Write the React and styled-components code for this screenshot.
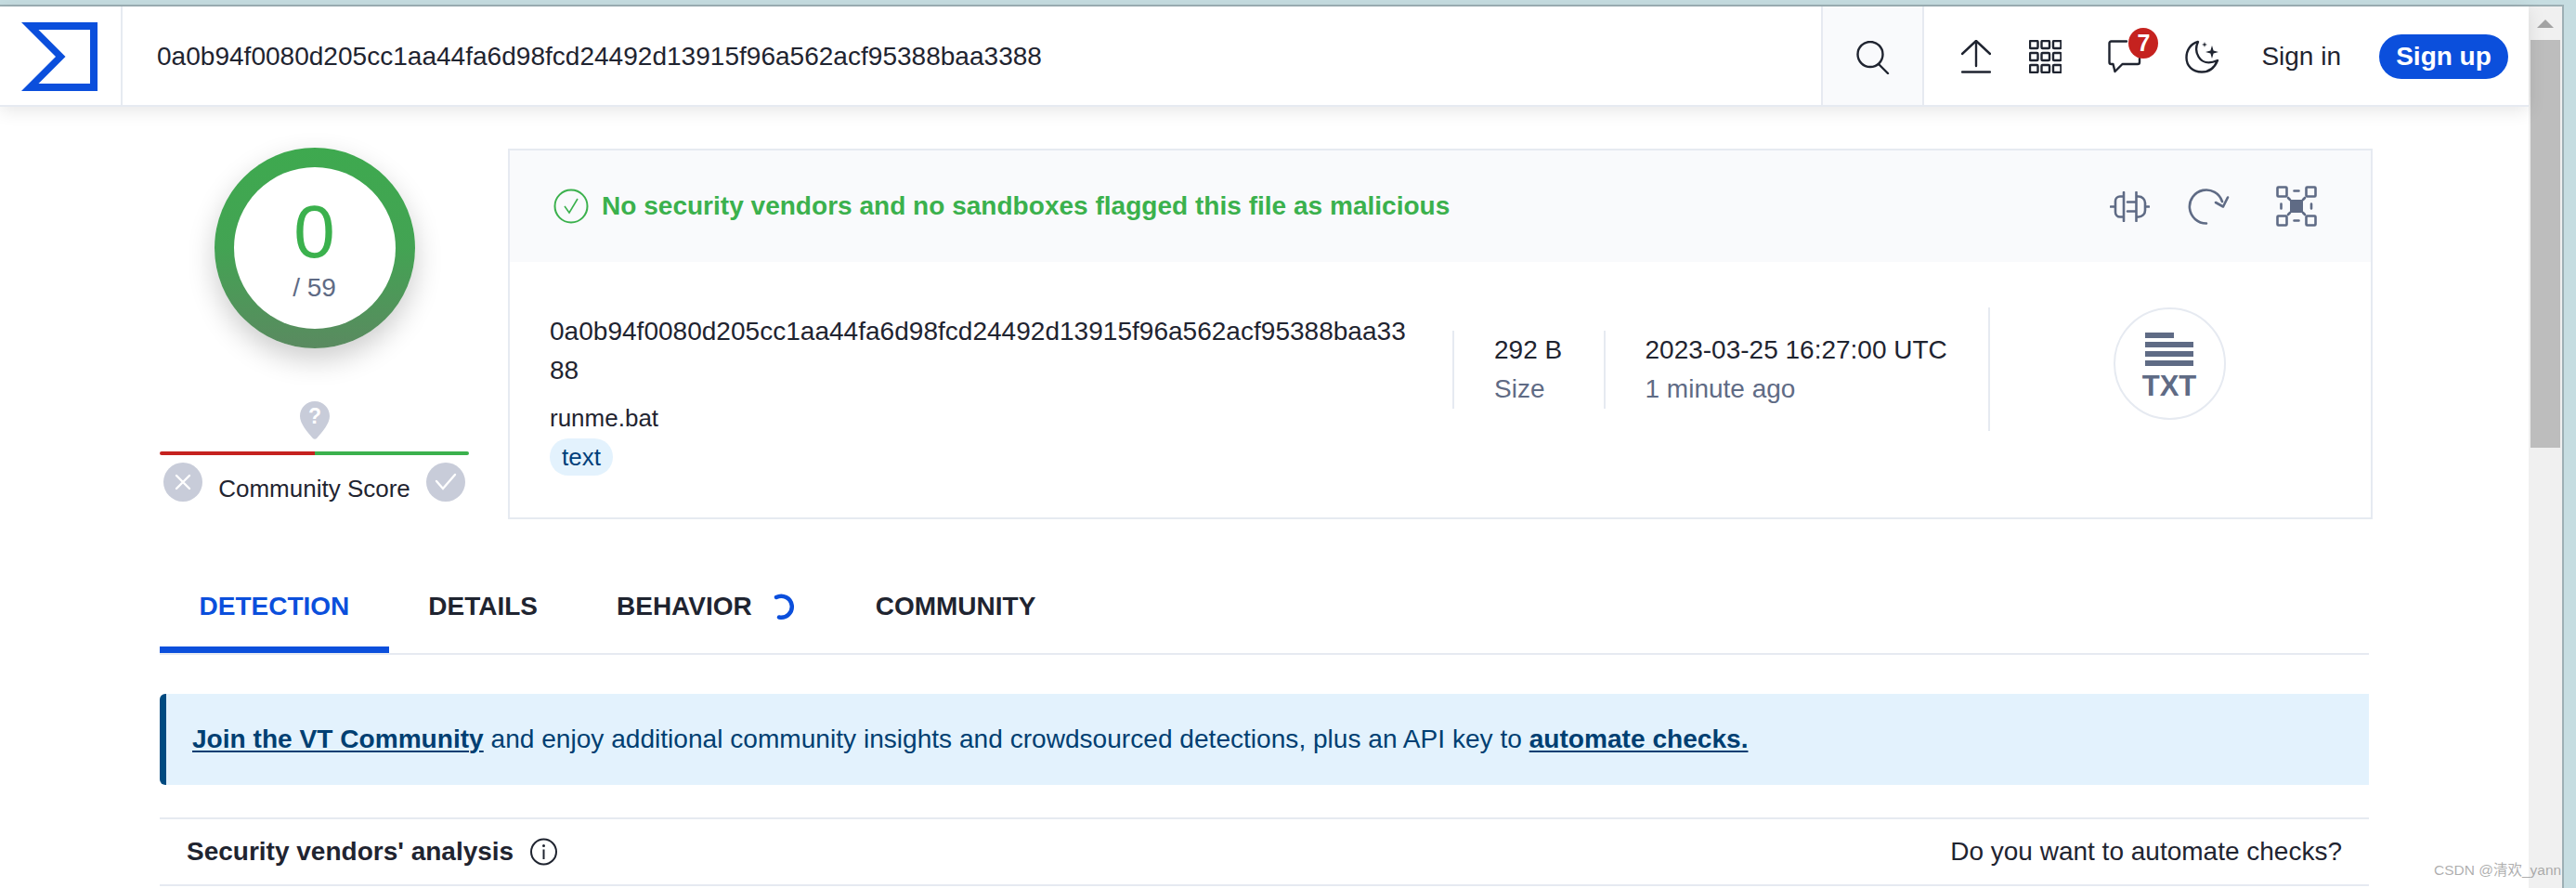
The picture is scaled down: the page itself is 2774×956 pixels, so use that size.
import React from 'react';
import styled, { createGlobalStyle } from 'styled-components';

const GlobalStyle = createGlobalStyle`
  html, body {
    margin: 0;
    padding: 0;
    background: #c6dde1;
    overflow: hidden;
  }
  * {
    box-sizing: border-box;
  }
  body {
    font-family: "Liberation Sans", Arial, sans-serif;
    color: #1f2430;
  }
`;

const Screen = styled.div`
  position: relative;
  width: 2774px;
  height: 956px;
  padding-top: 5px;
  overflow: hidden;
`;

const BrowserFrame = styled.div`
  display: flex;
  width: 2761px;
  height: 951px;
  border-top: 2px solid #9db0b5;
  border-right: 2px solid #9db0b5;
`;

const Page = styled.main`
  flex: 1;
  min-width: 0;
  background: #fff;
`;

const ScrollTrack = styled.div`
  width: 36px;
  background: #f0f0f0;
  display: flex;
  flex-direction: column;
  align-items: center;
  padding-top: 14px;
`;

const ScrollArrow = styled.div`
  width: 0;
  height: 0;
  border-left: 9px solid transparent;
  border-right: 9px solid transparent;
  border-bottom: 9px solid #a3a3a3;
`;

const ScrollThumb = styled.div`
  width: 32px;
  height: 439px;
  margin-top: 13px;
  background: #bdbdbd;
`;

const Header = styled.header`
  position: relative;
  display: flex;
  height: 108px;
  border-bottom: 2px solid #e6eaf1;
  background: #fff;
  box-shadow: 0 4px 18px rgba(0, 0, 0, 0.1);
`;

const LogoCell = styled.div`
  width: 132px;
  flex: none;
  padding: 17px 0 0 23px;
  border-right: 2px solid #e6eaf1;
`;

const SearchText = styled.div`
  flex: 1;
  padding-left: 37px;
  font-size: 28.05px;
  line-height: 108px;
  color: #1f2430;
`;

const SearchCell = styled.div`
  width: 111px;
  flex: none;
  display: flex;
  padding: 37px 0 0 36px;
  background: #f9fafc;
  border-left: 2px solid #e6eaf1;
  border-right: 2px solid #e6eaf1;
`;

const Actions = styled.div`
  display: flex;
  align-items: flex-start;
  padding: 36px 22px 0 40px;
  flex: none;
`;

const ActionIcon = styled.div`
  position: relative;
  display: flex;
  margin-left: ${(p) => p.$gap || 0}px;
`;

const Badge = styled.span`
  position: absolute;
  left: 22px;
  top: -13px;
  width: 32px;
  height: 33px;
  border-radius: 50%;
  background: #c5221f;
  color: #fff;
  font-size: 25px;
  font-weight: 700;
  line-height: 33px;
  text-align: center;
`;

const SignIn = styled.span`
  margin-left: 45px;
  font-size: 28px;
  line-height: 48px;
  margin-top: -6px;
  color: #1f2430;
`;

const SignUp = styled.span`
  width: 139px;
  height: 48px;
  margin-left: 41px;
  margin-top: -6px;
  border-radius: 24px;
  background: #0b4fdc;
  color: #fff;
  font-size: 28px;
  font-weight: 700;
  line-height: 48px;
  text-align: center;
`;

const Content = styled.div`
  padding: 45px 0 0 172px;
`;

const Summary = styled.section`
  display: flex;
  gap: 42px;
  width: 2383px;
`;

const ScoreColumn = styled.div`
  width: 333px;
  flex: none;
  display: flex;
  flex-direction: column;
  align-items: center;
`;

const ScoreRing = styled.div`
  width: 216px;
  height: 216px;
  margin-top: -1px;
  padding: 21px;
  border-radius: 50%;
  background: linear-gradient(180deg, #3ea94f 0%, #43a353 50%, #5a8a60 100%);
  box-shadow: 0 12px 30px rgba(0, 0, 0, 0.2);
`;

const ScoreInner = styled.div`
  width: 174px;
  height: 174px;
  border-radius: 50%;
  background: #fff;
  display: flex;
  flex-direction: column;
  align-items: center;
`;

const ScoreValue = styled.span`
  font-size: 80px;
  line-height: 80px;
  margin-top: 30px;
  color: #3bb14d;
`;

const ScoreTotal = styled.span`
  font-size: 28px;
  line-height: 32px;
  margin-top: 4px;
  color: #5f6b85;
`;

const PinWrap = styled.div`
  display: flex;
  margin-top: 57px;
`;

const ScoreBar = styled.div`
  display: flex;
  width: 100%;
  height: 4px;
  margin-top: 13px;
  border-radius: 2px;
  overflow: hidden;
`;

const ScoreBarPart = styled.div`
  flex: 1;
  background: ${(p) => p.$color};
`;

const VoteRow = styled.div`
  display: flex;
  justify-content: space-between;
  width: 100%;
  margin-top: 8px;
  padding: 0 4px;
`;

const VoteLabel = styled.span`
  font-size: 26px;
  line-height: 30px;
  margin-top: 13px;
  color: #1f2430;
`;

const Card = styled.div`
  flex: 1;
  min-width: 0;
  height: 399px;
  border: 2px solid #e6eaf1;
`;

const CardHeader = styled.div`
  display: flex;
  align-items: center;
  height: 120px;
  padding: 0 58px 0 47px;
  background: #f9fafc;
`;

const Verdict = styled.span`
  flex: 1;
  margin-left: 14px;
  font-size: 28.05px;
  font-weight: 700;
  color: #3bb14d;
`;

const CardTool = styled.div`
  display: flex;
  margin-left: ${(p) => p.$gap}px;
`;

const CardBody = styled.div`
  display: flex;
  align-items: flex-start;
`;

const FileColumn = styled.div`
  width: 1015px;
  flex: none;
  padding: 54px 0 0 43px;
`;

const FileHash = styled.div`
  width: 930px;
  font-size: 28.05px;
  line-height: 42px;
  word-break: break-all;
  color: #1f2430;
`;

const FileName = styled.div`
  margin-top: 13px;
  font-size: 26px;
  line-height: 34px;
  color: #1f2430;
`;

const FileTag = styled.span`
  display: inline-block;
  height: 40px;
  margin-top: 5px;
  padding: 0 13px;
  border-radius: 20px;
  background: #e3f2fd;
  color: #00407a;
  font-size: 26px;
  line-height: 40px;
`;

const Stat = styled.div`
  flex: none;
  width: ${(p) => p.$width}px;
  margin-top: 74px;
  padding-left: 43px;
  border-left: 2px solid #e6eaf1;
  font-size: 28px;
  line-height: 42px;
`;

const StatLabel = styled.div`
  color: #5f6b85;
`;

const TypeColumn = styled.div`
  margin-top: 49px;
  height: 133px;
  padding-left: 133px;
  border-left: 2px solid #e6eaf1;
`;

const TypeBadge = styled.div`
  width: 121px;
  height: 121px;
  border-radius: 50%;
  border: 2px solid #e6eaf1;
  display: flex;
  flex-direction: column;
  align-items: center;
  padding-top: 25px;
`;

const TypeText = styled.span`
  font-size: 31px;
  font-weight: 700;
  line-height: 26px;
  margin-top: 9px;
  color: #5f6b85;
`;

const Tabs = styled.nav`
  display: flex;
  width: 2379px;
  margin-top: 51px;
  border-bottom: 2px solid #e6eaf1;
`;

const Tab = styled.div`
  display: flex;
  align-items: center;
  height: 93px;
  padding: 0 42.5px;
  border-bottom: 7px solid ${(p) => (p.$active ? '#0b4fdc' : 'transparent')};
  color: ${(p) => (p.$active ? '#0b4fdc' : '#1f2430')};
  font-size: 28px;
  font-weight: 700;
`;

const TabSpinner = styled.div`
  display: flex;
  margin-left: 23px;
`;

const Banner = styled.div`
  width: 2379px;
  height: 98px;
  margin-top: 42px;
  padding-left: 28px;
  border-left: 7px solid #004a80;
  border-radius: 6px 0 0 6px;
  background: #e3f2fd;
  color: #003f72;
  font-size: 28.1px;
  line-height: 98px;
`;

const BannerLink = styled.a`
  font-weight: 700;
  text-decoration: underline;
  text-decoration-thickness: 2px;
  text-underline-offset: 3px;
  color: #003f72;
`;

const AnalysisRow = styled.div`
  display: flex;
  align-items: center;
  justify-content: space-between;
  width: 2379px;
  height: 74px;
  margin-top: 35px;
  padding: 0 29px;
  border-top: 2px solid #e6eaf1;
  border-bottom: 2px solid #e6eaf1;
  font-size: 28px;
`;

const AnalysisTitle = styled.div`
  display: flex;
  align-items: center;
  gap: 18px;
  font-weight: 700;
`;

const Watermark = styled.div`
  position: absolute;
  left: 2621px;
  top: 926px;
  white-space: nowrap;
  font-family: "Liberation Sans", "Noto Sans CJK SC", sans-serif;
  font-size: 15.5px;
  line-height: 22px;
  color: rgba(120, 120, 120, 0.6);
`;

const stroke = { fill: 'none', stroke: '#1f2430', strokeWidth: 2.4, strokeLinecap: 'round', strokeLinejoin: 'round' };
const grey = { fill: 'none', stroke: '#5f6b85', strokeWidth: 2.6, strokeLinecap: 'round', strokeLinejoin: 'round' };

const LogoIcon = () => (
  <svg width="82" height="74" viewBox="0 0 82 74">
    <path fill="#0b4fdc" fillRule="evenodd" d="M0 0H82V74H0L37 37ZM18.5 8L47.5 37L18.5 66H74V8Z" />
  </svg>
);

const SearchIcon = () => (
  <svg width="36" height="36" viewBox="0 0 36 36">
    <circle cx="15" cy="14.5" r="13.5" {...stroke} />
    <path d="M24 25L34 35" {...stroke} />
  </svg>
);

const UploadIcon = () => (
  <svg width="32" height="36" viewBox="0 0 32 36">
    <path d="M16 1V28M1 15L16 1L31 15M1 34.5H31" {...stroke} />
  </svg>
);

const GridIcon = () => {
  const cells = [];
  for (let row = 0; row < 3; row++) {
    for (let col = 0; col < 3; col++) {
      cells.push(<rect key={`${row}-${col}`} x={1 + col * 12.5} y={1 + row * 13} width="8.5" height="8" rx="1" {...stroke} />);
    }
  }
  return (
    <svg width="35" height="36" viewBox="0 0 35 36">
      {cells}
    </svg>
  );
};

const ChatIcon = () => (
  <svg width="36" height="36" viewBox="0 0 36 36">
    <path d="M20 1.5H3.5A2 2 0 0 0 1.5 3.5V24A2 2 0 0 0 3.5 26H5.5L7.5 34L15.5 26H32A2 2 0 0 0 34 24V20" {...stroke} />
  </svg>
);

const MoonIcon = () => (
  <svg width="37" height="36" viewBox="0 0 37 36">
    <path d="M14 2C6 4 1.5 11 1.5 19C1.5 28 8 34.5 18 34.5C26 34.5 32 29.5 35 22C25 26.5 18 24 14.5 18C11.5 13 11.5 7 14 2Z" {...stroke} />
    <path fill="#1f2430" d="M29 6L30.6 11.4L36 13L30.6 14.6L29 20L27.4 14.6L22 13L27.4 11.4Z" />
    <path fill="#1f2430" d="M21 2L21.7 4.3L24 5L21.7 5.7L21 8L20.3 5.7L18 5L20.3 4.3Z" />
  </svg>
);

const CheckCircleIcon = () => (
  <svg width="38" height="38" viewBox="0 0 38 38">
    <circle cx="19" cy="19" r="17.5" fill="none" stroke="#3bb14d" strokeWidth="2" />
    <path d="M12 19L17 26L26 11" fill="none" stroke="#3bb14d" strokeWidth="1.6" />
  </svg>
);

const CompareIcon = () => (
  <svg width="43" height="33" viewBox="0 0 43 33">
    <path d="M1 16.5H6M15 1V32M15 5.5H11A5 5 0 0 0 6 10.5V22.5A5 5 0 0 0 11 27.5H15M19 11.5H28.5M19 21.5H28.5M28.5 1V32M28.5 5.5H31A7 7 0 0 1 38 12.5V20.5A7 7 0 0 1 31 27.5H28.5M38 16.5H42" {...grey} />
  </svg>
);

const RefreshIcon = () => (
  <svg width="45" height="40" viewBox="0 0 45 40">
    <path d="M20 38.5A18 18 0 1 1 37 15M30 16L38 20.5L43 10.5" {...grey} />
  </svg>
);

const BubbleIcon = () => (
  <svg width="44" height="44" viewBox="0 0 44 44">
    <rect x="1.5" y="1.5" width="10" height="10" rx="1" {...grey} />
    <rect x="32.5" y="1.5" width="10" height="10" rx="1" {...grey} />
    <rect x="1.5" y="32.5" width="10" height="10" rx="1" {...grey} />
    <rect x="32.5" y="32.5" width="10" height="10" rx="1" {...grey} />
    <path d="M19.5 5.5H24.5M19.5 37.5H24.5M5.5 19.5V24.5M38 19.5V24.5M13 13L15 15M31 13L29 15M13 31L15 29M31 31L29 29" {...grey} />
    <rect x="15" y="15" width="14" height="14" fill="#5f6b85" />
  </svg>
);

const TxtLines = () => (
  <svg width="52" height="36" viewBox="0 0 52 36">
    <rect x="0" y="0" width="31" height="6" fill="#5f6b85" />
    <rect x="0" y="10" width="52" height="6" fill="#5f6b85" />
    <rect x="0" y="20" width="52" height="6" fill="#5f6b85" />
    <rect x="0" y="30" width="52" height="6" fill="#5f6b85" />
  </svg>
);

const PinIcon = () => (
  <svg width="32" height="41" viewBox="0 0 32 41">
    <path fill="#c8ccd9" d="M16 0C7 0 0 7 0 16C0 24 8 33 14 40C15 41 17 41 18 40C24 33 32 24 32 16C32 7 25 0 16 0Z" />
    <text x="16" y="24" textAnchor="middle" fontSize="23" fontWeight="700" fontFamily="Liberation Sans" fill="#fff">?</text>
  </svg>
);

const VoteDown = () => (
  <svg width="42" height="42" viewBox="0 0 42 42">
    <circle cx="21" cy="21" r="21" fill="#c8ccd9" />
    <path d="M14 14L28 28M28 14L14 28" stroke="#fff" strokeWidth="2.4" strokeLinecap="round" />
  </svg>
);

const VoteUp = () => (
  <svg width="42" height="42" viewBox="0 0 42 42">
    <circle cx="21" cy="21" r="21" fill="#c8ccd9" />
    <path d="M11 20L18 28L31 13" fill="none" stroke="#fff" strokeWidth="2.4" strokeLinecap="round" />
  </svg>
);

const Spinner = () => (
  <svg width="25" height="29" viewBox="0 0 25 29">
    <path d="M3 4A11.5 11.5 0 1 1 6 25.5" fill="none" stroke="#0b4fdc" strokeWidth="4.5" strokeLinecap="round" />
  </svg>
);

const InfoIcon = () => (
  <svg width="29" height="30" viewBox="0 0 29 30">
    <circle cx="14.5" cy="15" r="13.5" fill="none" stroke="#1f2430" strokeWidth="2" />
    <path d="M14.5 12.5V23" stroke="#1f2430" strokeWidth="2" />
    <circle cx="14.5" cy="8.5" r="1.5" fill="#1f2430" />
  </svg>
);

const HASH = '0a0b94f0080d205cc1aa44fa6d98fcd24492d13915f96a562acf95388baa3388';

const App = () => (
  <>
    <GlobalStyle />
    <Screen>
      <BrowserFrame>
        <Page>
          <Header>
            <LogoCell>
              <LogoIcon />
            </LogoCell>
            <SearchText>{HASH}</SearchText>
            <SearchCell>
              <SearchIcon />
            </SearchCell>
            <Actions>
              <ActionIcon>
                <UploadIcon />
              </ActionIcon>
              <ActionIcon $gap={41}>
                <GridIcon />
              </ActionIcon>
              <ActionIcon $gap={50}>
                <ChatIcon />
                <Badge>7</Badge>
              </ActionIcon>
              <ActionIcon $gap={47}>
                <MoonIcon />
              </ActionIcon>
              <SignIn>Sign in</SignIn>
              <SignUp>Sign up</SignUp>
            </Actions>
          </Header>

          <Content>
            <Summary>
              <ScoreColumn>
                <ScoreRing>
                  <ScoreInner>
                    <ScoreValue>0</ScoreValue>
                    <ScoreTotal>/ 59</ScoreTotal>
                  </ScoreInner>
                </ScoreRing>
                <PinWrap>
                  <PinIcon />
                </PinWrap>
                <ScoreBar>
                  <ScoreBarPart $color="#c5221f" />
                  <ScoreBarPart $color="#3bb14d" />
                </ScoreBar>
                <VoteRow>
                  <VoteDown />
                  <VoteLabel>Community Score</VoteLabel>
                  <VoteUp />
                </VoteRow>
              </ScoreColumn>

              <Card>
                <CardHeader>
                  <CheckCircleIcon />
                  <Verdict>No security vendors and no sandboxes flagged this file as malicious</Verdict>
                  <CardTool $gap={0}>
                    <CompareIcon />
                  </CardTool>
                  <CardTool $gap={41}>
                    <RefreshIcon />
                  </CardTool>
                  <CardTool $gap={50}>
                    <BubbleIcon />
                  </CardTool>
                </CardHeader>
                <CardBody>
                  <FileColumn>
                    <FileHash>{HASH}</FileHash>
                    <FileName>runme.bat</FileName>
                    <FileTag>text</FileTag>
                  </FileColumn>
                  <Stat $width={162.5}>
                    292 B
                    <StatLabel>Size</StatLabel>
                  </Stat>
                  <Stat $width={414}>
                    2023-03-25 16:27:00 UTC
                    <StatLabel>1 minute ago</StatLabel>
                  </Stat>
                  <TypeColumn>
                    <TypeBadge>
                      <TxtLines />
                      <TypeText>TXT</TypeText>
                    </TypeBadge>
                  </TypeColumn>
                </CardBody>
              </Card>
            </Summary>

            <Tabs>
              <Tab $active>DETECTION</Tab>
              <Tab>DETAILS</Tab>
              <Tab>
                BEHAVIOR
                <TabSpinner>
                  <Spinner />
                </TabSpinner>
              </Tab>
              <Tab>COMMUNITY</Tab>
            </Tabs>

            <Banner>
              <BannerLink>Join the VT Community</BannerLink> and enjoy additional community insights and crowdsourced detections, plus an API key to <BannerLink>automate checks.</BannerLink>
            </Banner>

            <AnalysisRow>
              <AnalysisTitle>
                Security vendors' analysis
                <InfoIcon />
              </AnalysisTitle>
              <span>Do you want to automate checks?</span>
            </AnalysisRow>
          </Content>
        </Page>
        <ScrollTrack>
          <ScrollArrow />
          <ScrollThumb />
        </ScrollTrack>
      </BrowserFrame>
      <Watermark>CSDN @清欢_yann</Watermark>
    </Screen>
  </>
);

export default App;
